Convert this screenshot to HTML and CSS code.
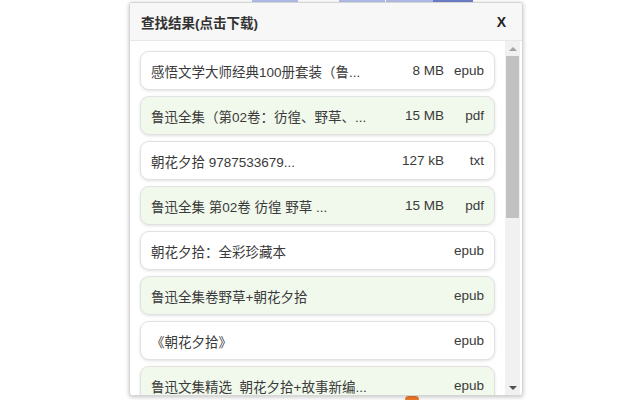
FILE: index.html
```html
<!DOCTYPE html>
<html>
<head>
<meta charset="utf-8">
<link rel="stylesheet" href="styles.css">
</head>
<body>
<div class="bg-links">
  <span class="lk l1"></span><span class="lk l2"></span><span class="lk l3"></span><span class="lk l4"></span>
</div>
<div class="orange-tab"></div>
<div class="dialog">
  <div class="header">
    <span class="title">查找结果(点击下载)</span>
    <span class="close">X</span>
  </div>
  <div class="body">
    <div class="list">
      <div class="item"><span class="name">感悟文学大师经典100册套装（鲁...</span><span class="size">8 MB</span><span class="type">epub</span></div>
      <div class="item alt"><span class="name">鲁迅全集（第02卷：彷徨、野草、...</span><span class="size">15 MB</span><span class="type">pdf</span></div>
      <div class="item"><span class="name">朝花夕拾 9787533679...</span><span class="size">127 kB</span><span class="type">txt</span></div>
      <div class="item alt"><span class="name">鲁迅全集 第02卷 彷徨 野草 ...</span><span class="size">15 MB</span><span class="type">pdf</span></div>
      <div class="item"><span class="name">朝花夕拾：全彩珍藏本</span><span class="size"></span><span class="type">epub</span></div>
      <div class="item alt"><span class="name">鲁迅全集卷野草+朝花夕拾</span><span class="size"></span><span class="type">epub</span></div>
      <div class="item"><span class="name">《朝花夕拾》</span><span class="size"></span><span class="type">epub</span></div>
      <div class="item alt"><span class="name">鲁迅文集精选&nbsp; 朝花夕拾+故事新编...</span><span class="size"></span><span class="type">epub</span></div>
    </div>
    <div class="scrollbar">
      <div class="arrow up"></div>
      <div class="track"><div class="thumb"></div></div>
      <div class="arrow down"></div>
    </div>
  </div>
</div>
</body>
</html>
```
FILE: styles.css
```css
html, body {
  margin: 0;
  padding: 0;
  background: #ffffff;
  width: 640px;
  height: 400px;
  overflow: hidden;
  font-family: "Liberation Sans", "Noto Sans CJK SC", sans-serif;
}
.bg-links {
  position: absolute;
  left: 0;
  top: 0;
  width: 640px;
  height: 2px;
}
.lk {
  position: absolute;
  top: 0;
  height: 2px;
  background: #b4c0ec;
}
.l1 { left: 252px; width: 46px; }
.l2 { left: 339px; width: 46px; }
.l3 { left: 386px; width: 50px; }
.l4 { left: 433px; width: 40px; background: #6f80cc; }
.orange-tab {
  position: absolute;
  left: 405px;
  top: 396px;
  width: 14px;
  height: 10px;
  border-radius: 4px;
  background: #f07a2a;
}
.dialog {
  position: absolute;
  left: 129px;
  top: 2px;
  width: 392px;
  height: 392px;
  border: 1px solid #d6d6d6;
  border-radius: 3px;
  background: #ffffff;
  box-shadow: 0 1px 4px rgba(0, 0, 0, 0.25);
  display: flex;
  flex-direction: column;
  overflow: hidden;
}
.header {
  height: 37px;
  flex: none;
  background: #f7f7f7;
  border-bottom: 1px solid #e8e8e8;
  display: flex;
  align-items: center;
  justify-content: space-between;
  padding: 0 16px 0 11px;
}
.title {
  font-size: 13.5px;
  font-weight: bold;
  color: #333333;
}
.close {
  font-size: 14px;
  font-weight: bold;
  color: #222222;
  font-family: "Liberation Sans", sans-serif;
}
.body {
  flex: 1;
  display: flex;
  min-height: 0;
}
.list {
  flex: 1;
  padding: 10px 10px 0 10px;
  display: flex;
  flex-direction: column;
  gap: 6px;
  overflow: hidden;
}
.item {
  flex: none;
  height: 37px;
  border: 1px solid #e2e2e2;
  border-radius: 9px;
  background: #ffffff;
  box-shadow: 0 1px 3px rgba(0, 0, 0, 0.12);
  display: flex;
  align-items: center;
  padding: 0 10px 0 10px;
  font-size: 13.5px;
  color: #3a3a3a;
}
.item.alt {
  background: #f1f8ec;
}
.name {
  flex: 1;
  white-space: nowrap;
  overflow: hidden;
}
.size {
  text-align: right;
  white-space: nowrap;
}
.type {
  width: 40px;
  text-align: right;
  flex: none;
}
.scrollbar {
  width: 15px;
  flex: none;
  background: #f1f1f1;
  display: flex;
  flex-direction: column;
  margin-right: 2px;
}
.arrow {
  height: 15px;
  flex: none;
  display: flex;
  align-items: center;
  justify-content: center;
}
.arrow.up::before {
  content: "";
  border-left: 4px solid transparent;
  border-right: 4px solid transparent;
  border-bottom: 4px solid #a3a3a3;
}
.arrow.down::before {
  content: "";
  border-left: 4px solid transparent;
  border-right: 4px solid transparent;
  border-top: 4px solid #505050;
}
.track {
  flex: 1;
  padding: 0 1px;
}
.thumb {
  height: 162px;
  background: #c1c1c1;
}
```
